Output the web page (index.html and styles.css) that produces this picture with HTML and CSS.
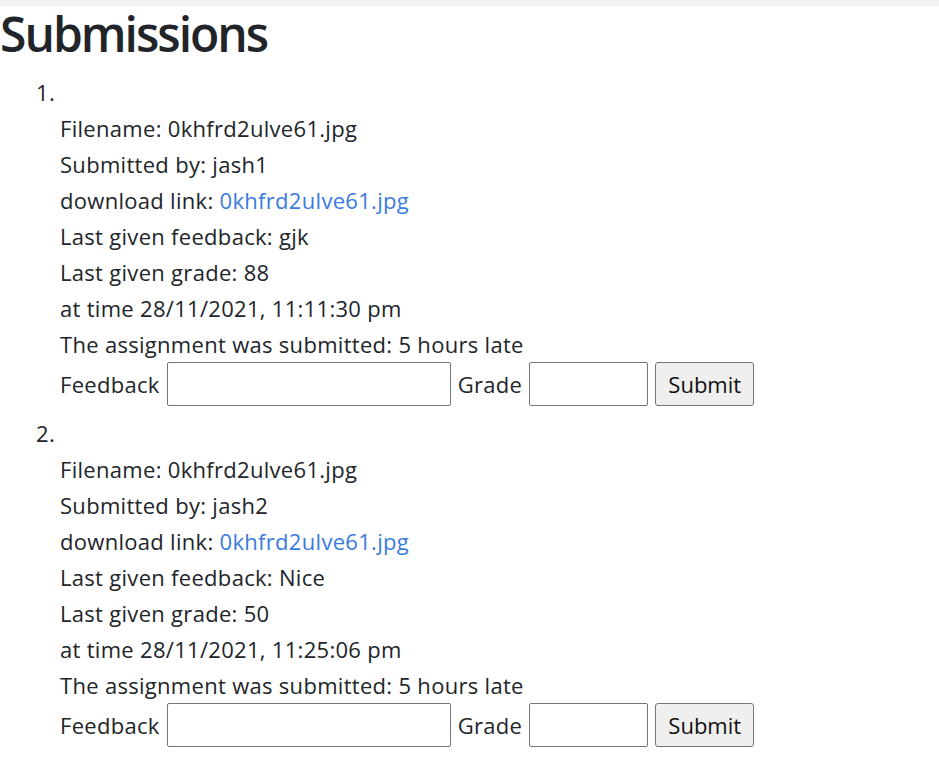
FILE: index.html
```html
<!DOCTYPE html>
<html>
<head>
<meta charset="utf-8">
<link rel="stylesheet" href="styles.css">
</head>
<body>
<div class="topbar"></div>
<h1 class="title">Submissions</h1>
<ol class="subs">
  <li class="sub">
    <div class="num">1.</div>
    <div class="details">
      <div class="line">Filename: 0khfrd2ulve61.jpg</div>
      <div class="line">Submitted by: jash1</div>
      <div class="line">download link: <a class="link" href="#">0khfrd2ulve61.jpg</a></div>
      <div class="line">Last given feedback: gjk</div>
      <div class="line">Last given grade: 88</div>
      <div class="line">at time 28/11/2021, 11:11:30 pm</div>
      <div class="line">The assignment was submitted: 5 hours late</div>
      <form class="form">
        <label class="lbl">Feedback</label>
        <input class="inp inp-fb" type="text">
        <label class="lbl">Grade</label>
        <input class="inp inp-gr" type="text">
        <button class="btn" type="button">Submit</button>
      </form>
    </div>
  </li>
  <li class="sub">
    <div class="num">2.</div>
    <div class="details">
      <div class="line">Filename: 0khfrd2ulve61.jpg</div>
      <div class="line">Submitted by: jash2</div>
      <div class="line">download link: <a class="link" href="#">0khfrd2ulve61.jpg</a></div>
      <div class="line">Last given feedback: Nice</div>
      <div class="line">Last given grade: 50</div>
      <div class="line">at time 28/11/2021, 11:25:06 pm</div>
      <div class="line">The assignment was submitted: 5 hours late</div>
      <form class="form">
        <label class="lbl">Feedback</label>
        <input class="inp inp-fb" type="text">
        <label class="lbl">Grade</label>
        <input class="inp inp-gr" type="text">
        <button class="btn" type="button">Submit</button>
      </form>
    </div>
  </li>
</ol>
</body>
</html>
```
FILE: styles.css
```css
html, body {
  margin: 0;
  padding: 0;
  background: #fff;
}
body {
  font-family: "Open Sans", "Noto Sans", sans-serif;
  font-size: 22px;
  letter-spacing: 0.3px;
  line-height: 36px;
  color: #212529;
}
.topbar {
  height: 6px;
  background: #f3f3f3;
}
.title {
  margin: 0 0 13px 0;
  font-size: 48px;
  font-weight: 600;
  line-height: 55px;
  letter-spacing: -2px;
}
.subs {
  list-style: none;
  margin: 0;
  padding: 0 0 0 36px;
}
.num {
  height: 36px;
}
.details {
  padding-left: 24px;
}
.line {
  height: 36px;
  white-space: nowrap;
}
.link {
  color: #3a7be0;
  text-decoration: none;
}
.form {
  display: flex;
  gap: 7px;
  height: 53px;
  margin: 0;
  align-items: flex-start;
}
.lbl {
  white-space: nowrap;
  line-height: 44px;
}
.inp {
  box-sizing: border-box;
  height: 44px;
  border: 1px solid #767676;
  border-radius: 2px;
  padding: 0 4px;
  font: inherit;
  background: #fff;
}
.inp-fb { width: 284px; }
.inp-gr { width: 119px; }
.btn {
  box-sizing: border-box;
  height: 44px;
  width: 99px;
  border: 1px solid #767676;
  border-radius: 3px;
  background: #efefef;
  font: inherit;
  letter-spacing: 0;
  color: #111;
  padding: 0;
}
```
